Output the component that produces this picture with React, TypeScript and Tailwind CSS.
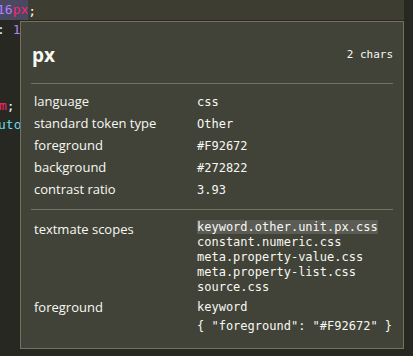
import React from "react";

const mono = { fontFamily: '"DejaVu Sans Mono", "Liberation Mono", monospace' };
const sans = { fontFamily: '"Open Sans", "Noto Sans", sans-serif' };

const rows: [string, string][] = [
  ["language", "css"],
  ["standard token type", "Other"],
  ["foreground", "#F92672"],
  ["background", "#272822"],
  ["contrast ratio", "3.93"],
];

const scopes = [
  "constant.numeric.css",
  "meta.property-value.css",
  "meta.property-list.css",
  "source.css",
];

export default function App() {
  return (
    <div className="relative w-[413px] h-[356px] overflow-hidden bg-[#272822]">
      {/* editor lines */}
      <div className="flex flex-col text-[13px] leading-[19px] text-[#f8f8f2]" style={mono}>
        <div className="h-[20px] w-[404px] bg-[#3e3d32] flex items-center">
          <span className="ml-[-3px] bg-[#4b4862] leading-[20px]">
            <span className="text-[#ae81ff]">16</span>
            <span className="text-[#f92672]">px</span>
          </span>
          <span>;</span>
        </div>
        <div className="h-[19px] ml-[-3px] whitespace-pre">
          <span>:</span> <span className="text-[#ae81ff]">1</span>
        </div>
        <div className="h-[19px]" />
        <div className="h-[19px]" />
        <div className="h-[19px]" />
        <div className="h-[19px] ml-[-1px]">
          <span className="text-[#f92672]">m</span>
          <span>;</span>
        </div>
        <div className="h-[19px] ml-[-2px] text-[#66d9ef]">uto</div>
      </div>

      {/* token inspector widget */}
      <div
        className="absolute left-[20px] top-[21px] w-[384px] h-[328px] border border-[#75715e] bg-[#414339] text-[#f8f8f2] px-[10px]"
        style={sans}
      >
        <div className="flex items-center justify-between pt-[19px] h-[47px]">
          <span className="pl-[1px] text-[19px] font-bold leading-[28px]">px</span>
          <span className="text-[11px]" style={mono}>2 chars</span>
        </div>
        <div className="mt-[14px] h-px bg-[#75715e]" />
        <div className="pt-[7px] pb-[8px]">
          {rows.map(([k, v]) => (
            <div key={k} className="flex h-[22px] items-center">
              <div className="w-[166px] pl-[3px] text-[13px]">{k}</div>
              <div className="text-[12px]" style={mono}>{v}</div>
            </div>
          ))}
        </div>
        <div className="h-px bg-[#75715e]" />
        <div className="pt-[10px]">
          <div className="flex">
            <div className="w-[166px] pl-[3px] text-[13px] leading-[18px]">textmate scopes</div>
            <div className="flex flex-col text-[12px] leading-[15px]" style={mono}>
              <div className="h-[15px]">
                <span className="bg-[#5b5c55] inline-block leading-[14px]">keyword.other.unit.px.css</span>
              </div>
              {scopes.map((s) => (
                <div key={s} className="h-[15px]">{s}</div>
              ))}
            </div>
          </div>
          <div className="flex mt-[3px]">
            <div className="w-[166px] pl-[3px] text-[13px] leading-[19px]">foreground</div>
            <div className="flex flex-col text-[12px] leading-[19px]" style={mono}>
              <div>keyword</div>
              <div className="whitespace-pre">{'{ "foreground": "#F92672" }'}</div>
            </div>
          </div>
        </div>
      </div>
    </div>
  );
}
